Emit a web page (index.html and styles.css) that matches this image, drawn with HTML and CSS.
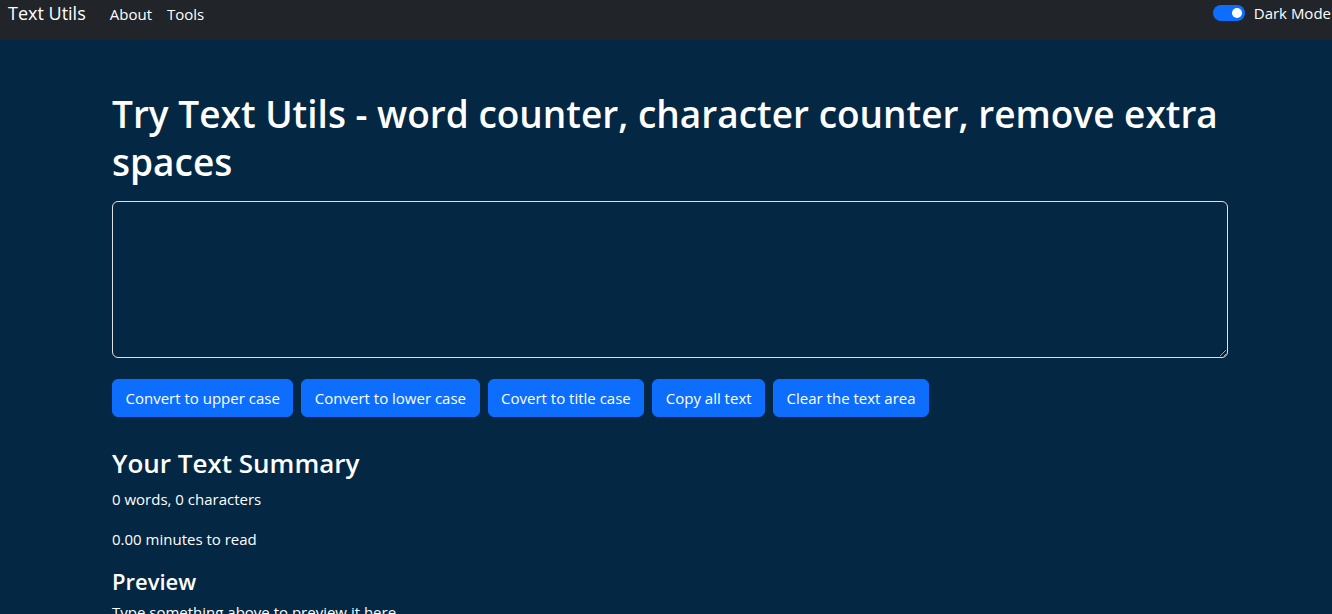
FILE: index.html
```html
<!DOCTYPE html>
<html lang="en">
<head>
<meta charset="utf-8">
<title>TextUtils</title>
<link rel="stylesheet" href="styles.css">
</head>
<body>
<nav class="navbar">
  <div class="nav-left">
    <a class="brand" href="#">Text Utils</a>
    <a class="nav-link" href="#">About</a>
    <a class="nav-link" href="#">Tools</a>
  </div>
  <div class="switch-wrap">
    <span class="switch"><span class="knob"></span></span>
    <span class="switch-label">Dark Mode</span>
  </div>
</nav>
<main class="container">
  <h1 class="title">Try Text Utils - word counter, character counter, remove extra spaces</h1>
  <textarea class="box" rows="8"></textarea>
  <div class="buttons">
    <button class="btn">Convert to upper case</button>
    <button class="btn">Convert to lower case</button>
    <button class="btn">Covert to title case</button>
    <button class="btn">Copy all text</button>
    <button class="btn">Clear the text area</button>
  </div>
  <h2 class="sub">Your Text Summary</h2>
  <p class="para">0 words, 0 characters</p>
  <p class="para">0.00 minutes to read</p>
  <h3 class="sub-small">Preview</h3>
  <p class="para">Type something above to preview it here</p>
</main>
</body>
</html>
```
FILE: styles.css
```css
html, body {
  margin: 0;
  padding: 0;
}
body {
  background: #042743;
  color: #fff;
  font-family: "Open Sans", "Noto Sans", sans-serif;
  font-size: 15px;
  overflow: hidden;
  height: 614px;
}
.navbar {
  height: 40px;
  background: #212529;
  display: flex;
  justify-content: space-between;
  align-items: flex-start;
  padding: 0 0 0 8px;
  overflow: hidden;
}
.nav-left {
  display: flex;
  align-items: baseline;
  padding-top: 1px;
}
.brand {
  color: #fff;
  text-decoration: none;
  font-size: 18px;
  margin-right: 24px;
}
.nav-link {
  color: #fff;
  text-decoration: none;
  font-size: 15px;
  margin-right: 15px;
}
.switch-wrap {
  display: flex;
  align-items: center;
  gap: 9px;
  padding-top: 3px;
  margin-right: 1px;
}
.switch {
  width: 32px;
  height: 16px;
  border-radius: 8px;
  background: #0d6efd;
  display: flex;
  justify-content: flex-end;
  align-items: center;
  padding: 0 3px;
  box-sizing: border-box;
}
.knob {
  width: 10px;
  height: 10px;
  border-radius: 50%;
  background: #fff;
}
.switch-label {
  font-size: 15px;
  white-space: nowrap;
}
.container {
  width: 1116px;
  margin-left: 112px;
  padding-top: 50px;
}
.title {
  font-size: 37px;
  font-weight: 600;
  line-height: 48px;
  margin: 0 0 15px;
}
.box {
  display: block;
  width: 1116px;
  height: 157px;
  box-sizing: border-box;
  background: #042743;
  color: #fff;
  border: 1px solid #dee2e6;
  border-radius: 6px;
  margin: 0 0 21px;
  font-family: inherit;
  font-size: 15px;
}
.buttons {
  display: flex;
  gap: 8px;
  margin-bottom: 30px;
}
.btn {
  background: #0d6efd;
  border: 1px solid #0d6efd;
  color: #fff;
  font-family: inherit;
  font-size: 15px;
  height: 38px;
  padding: 0 12.5px;
  border-radius: 6px;
}
.sub {
  font-size: 26px;
  font-weight: 600;
  line-height: 32px;
  margin: 0 0 8px;
}
.sub-small {
  font-size: 22px;
  font-weight: 600;
  line-height: 28px;
  margin: 0 0 5px;
}
.para {
  font-size: 15px;
  line-height: 24px;
  margin: 0 0 16px;
}
```
